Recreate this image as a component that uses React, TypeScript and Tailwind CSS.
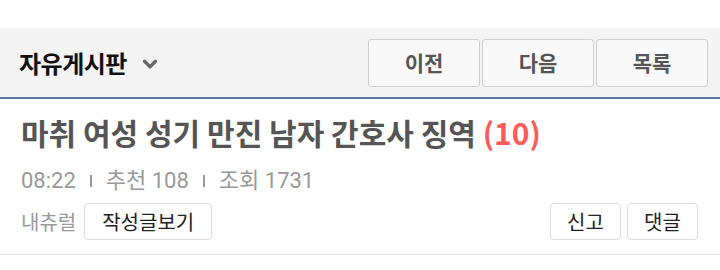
import { ChevronDown } from 'lucide-react';

const font = { fontFamily: '"Noto Sans CJK KR", "Noto Sans", Roboto, sans-serif' };

function NavButton({ label }: { label: string }) {
  return (
    <button className="w-[112px] h-[48px] bg-[#f9f9f9] border border-[#cfcfcf] rounded-[3px] text-[21px] font-bold text-[#555]">
      {label}
    </button>
  );
}

function SmallButton({ label, className = '' }: { label: string; className?: string }) {
  return (
    <button
      className={`h-[37px] bg-white border border-[#ddd] rounded-[4px] text-[20px] text-[#222] ${className}`}
    >
      {label}
    </button>
  );
}

export default function App() {
  return (
    <div className="w-[720px] h-[270px] bg-white" style={font}>
      <div className="h-[28px]" />
      <header className="h-[71px] bg-[#f4f4f4] border-b-2 border-[#5a7898] flex items-center justify-between pl-[19px] pr-[12px]">
        <div className="flex items-center gap-[12px]">
          <span className="text-[24px] font-bold text-[#111] tracking-[-0.5px]">자유게시판</span>
          <ChevronDown size={22} strokeWidth={3.5} className="text-[#666] mt-[2px]" />
        </div>
        <div className="flex gap-[2px]">
          <NavButton label="이전" />
          <NavButton label="다음" />
          <NavButton label="목록" />
        </div>
      </header>
      <div className="border-b border-[#e2e2e2] pl-[21px] pr-[22px] pt-[13px] pb-[14px]">
        <h1 className="text-[30px] font-bold text-[#555] leading-[40px]">
          마취 여성 성기 만진 남자 간호사 징역 <span className="text-[#ff5a5a]">(10)</span>
        </h1>
        <div className="mt-[15px] flex items-center text-[22px] text-[#999] leading-[28px]" style={{ fontFamily: 'Roboto, "Noto Sans CJK KR", sans-serif' }}>
          <span>08:22</span>
          <span className="mx-[14px] w-[2px] h-[12px] bg-[#999]" />
          <span>추천 108</span>
          <span className="mx-[14px] w-[2px] h-[12px] bg-[#999]" />
          <span>조회 1731</span>
        </div>
        <div className="mt-[8px] flex items-center justify-between">
          <div className="flex items-center gap-[8px]">
            <span className="text-[20px] text-[#999]">내츄럴</span>
            <SmallButton label="작성글보기" className="w-[128px]" />
          </div>
          <div className="flex gap-[6px]">
            <SmallButton label="신고" className="w-[71px]" />
            <SmallButton label="댓글" className="w-[71px]" />
          </div>
        </div>
      </div>
    </div>
  );
}
